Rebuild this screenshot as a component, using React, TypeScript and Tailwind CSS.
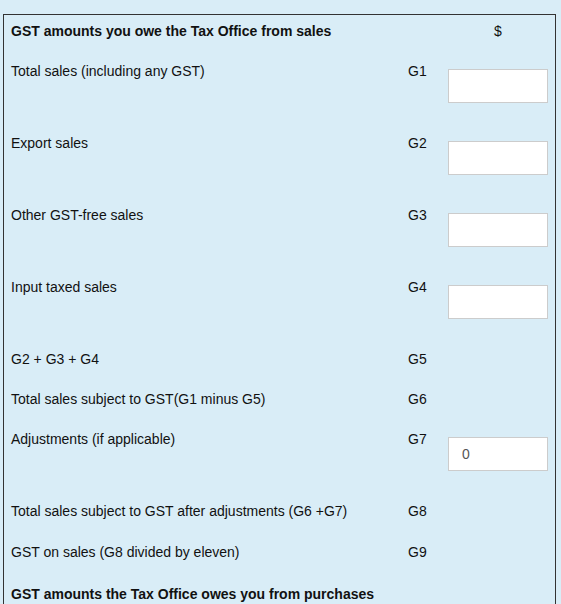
import React from 'react';

type Row = { label: string; code?: string; input?: boolean; value?: string; heading?: boolean; h?: string };

const rows: Row[] = [
    { label: 'GST amounts you owe the Tax Office from sales', heading: true },
    { label: 'Total sales (including any GST)', code: 'G1', input: true },
    { label: 'Export sales', code: 'G2', input: true },
    { label: 'Other GST-free sales', code: 'G3', input: true },
    { label: 'Input taxed sales', code: 'G4', input: true },
    { label: 'G2 + G3 + G4', code: 'G5' },
    { label: 'Total sales subject to GST(G1 minus G5)', code: 'G6' },
    { label: 'Adjustments (if applicable)', code: 'G7', input: true, value: '0' },
    { label: 'Total sales subject to GST after adjustments (G6 +G7)', code: 'G8', h: 'h-[41px]' },
    { label: 'GST on sales (G8 divided by eleven)', code: 'G9', h: 'h-[42px]' },
    { label: 'GST amounts the Tax Office owes you from purchases', heading: true },
];

export default function App() {
    return (
        <div className="min-h-screen bg-[#d9edf7] pt-[14px] pl-[3px] overflow-hidden text-[14px] text-[#111]"
            style={{ fontFamily: '"Liberation Sans", Arial, sans-serif' }}>
            <div className="w-[553px] border border-[#333] px-[7px] pb-[60px]">
                {rows.map((r, i) => (
                    <div key={i} className={`grid grid-cols-[397px_40px_100px] ${r.input ? 'h-[72px]' : r.h ?? 'h-[40px]'}`}>
                        <div className={`pt-[6px] leading-[20px] ${r.heading ? 'font-bold' : ''}`}>{r.label}</div>
                        <div className="pt-[6px] leading-[20px]">{r.code}</div>
                        <div>
                            {i === 0 && <div className="pt-[6px] leading-[20px] text-center">$</div>}
                            {r.input && (
                                <input
                                    type="text"
                                    defaultValue={r.value ?? ''}
                                    className="mt-[14px] h-[34px] w-[100px] bg-white border border-[#ccc] pl-[13px] text-[14px] text-[#555] outline-none"
                                    style={{ fontFamily: '"Liberation Sans", Arial, sans-serif' }}
                                />
                            )}
                        </div>
                    </div>
                ))}
            </div>
        </div>
    );
}
